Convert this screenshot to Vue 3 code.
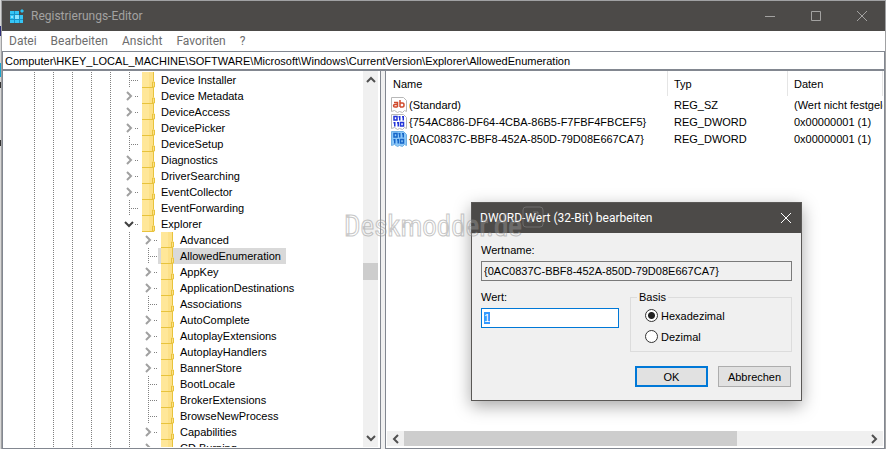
<script setup>
import { onMounted, ref } from "vue";

const menu = ["Datei", "Bearbeiten", "Ansicht", "Favoriten", "?"];
const path = ref(
  "Computer\\HKEY_LOCAL_MACHINE\\SOFTWARE\\Microsoft\\Windows\\CurrentVersion\\Explorer\\AllowedEnumeration"
);

// level 1 = below CurrentVersion, level 2 = below Explorer
const keys = [
  { name: "Device Installer", level: 1 },
  { name: "Device Metadata", level: 1, state: "closed" },
  { name: "DeviceAccess", level: 1, state: "closed" },
  { name: "DevicePicker", level: 1, state: "closed" },
  { name: "DeviceSetup", level: 1 },
  { name: "Diagnostics", level: 1, state: "closed" },
  { name: "DriverSearching", level: 1, state: "closed" },
  { name: "EventCollector", level: 1, state: "closed" },
  { name: "EventForwarding", level: 1 },
  { name: "Explorer", level: 1, state: "open" },
  { name: "Advanced", level: 2, state: "closed" },
  { name: "AllowedEnumeration", level: 2, selected: true },
  { name: "AppKey", level: 2, state: "closed" },
  { name: "ApplicationDestinations", level: 2, state: "closed" },
  { name: "Associations", level: 2 },
  { name: "AutoComplete", level: 2, state: "closed" },
  { name: "AutoplayExtensions", level: 2, state: "closed" },
  { name: "AutoplayHandlers", level: 2, state: "closed" },
  { name: "BannerStore", level: 2, state: "closed" },
  { name: "BootLocale", level: 2 },
  { name: "BrokerExtensions", level: 2 },
  { name: "BrowseNewProcess", level: 2 },
  { name: "Capabilities", level: 2, state: "closed" },
  { name: "CD Burning", level: 2, state: "closed" },
];

const values = [
  { name: "(Standard)", type: "REG_SZ", data: "(Wert nicht festgelegt)" },
  {
    name: "{754AC886-DF64-4CBA-86B5-F7FBF4FBCEF5}",
    type: "REG_DWORD",
    data: "0x00000001 (1)",
  },
  {
    name: "{0AC0837C-BBF8-452A-850D-79D08E667CA7}",
    type: "REG_DWORD",
    data: "0x00000001 (1)",
    selected: true,
  },
];

const valueName = ref("{0AC0837C-BBF8-452A-850D-79D08E667CA7}");
const value = ref("1");
const base = ref("hex");
const valueInput = ref(null);

onMounted(() => {
  valueInput.value.focus();
  valueInput.value.select();
});
</script>

<template>
  <main class="desktop">
    <section class="window">
      <header class="titlebar">
        <svg class="app-icon" width="15" height="15" viewBox="0 0 15 15">
          <path fill="#1793c8" d="M0 2h9v4h4v8H0z" />
          <path fill="#35c5f5" d="M0 2h4v3H0zM5 2h4v3H5zM0 6h4v4H0zM5 6h4v4H5zM10 6h3v4h-3zM0 11h4v3H0zM5 11h4v3H5zM10 11h3v3h-3z" />
          <path fill="#8fe4ff" d="M5 6h4v4H5zM1 7h2v2H1z" />
          <path fill="#2bc4f8" d="M12 0l2 2-2 2-2-2z" />
        </svg>
        <h1>Registrierungs-Editor</h1>
        <div class="window-buttons">
          <button aria-label="Minimieren">
            <svg width="12" height="12"><path d="M1 6.500h10" /></svg>
          </button>
          <button aria-label="Maximieren">
            <svg width="12" height="12"><path d="M1.500 1.500h9v9h-9z" /></svg>
          </button>
          <button aria-label="Schließen">
            <svg width="12" height="12"><path d="M1 1l10 10M11 1L1 11" /></svg>
          </button>
        </div>
      </header>

      <nav class="menu">
        <button v-for="item in menu" :key="item">{{ item }}</button>
      </nav>

      <input v-model="path" class="address" aria-label="Adresse" />

      <div class="panes">
        <div class="pane tree-pane">
          <ul class="tree">
            <li v-for="key in keys" :key="key.name" :class="{ selected: key.selected }">
              <span v-for="n in key.level + 4" :key="n" class="guide"></span>
              <span class="branch" :class="key.state || 'leaf'">
                <svg v-if="key.state === 'closed'" width="8" height="10">
                  <path d="M2 1l4 4-4 4" stroke="#a0a0a0" />
                </svg>
                <svg v-if="key.state === 'open'" width="10" height="8">
                  <path d="M1 2l4 4 4-4" stroke="#404040" />
                </svg>
              </span>
              <span class="entry">
                <svg class="folder" width="14" height="16">
                  <path fill="#ffe799" d="M0 0h12v15H0z" />
                  <path fill="#fbdc7a" d="M7 0h5v15H7z" opacity="0.5" />
                  <path fill="none" stroke="#e8c33c" d="M0 15.500h12M11.500 0v9M10.500 15v-5h2v5z" />
                </svg>
                <span class="key-name">{{ key.name }}</span>
              </span>
            </li>
          </ul>
          <div class="scrollbar vertical">
            <svg width="10" height="8"><path d="M1 6l4-4 4 4" /></svg>
            <div class="track"><div class="thumb"></div></div>
            <svg width="10" height="8"><path d="M1 2l4 4 4-4" /></svg>
          </div>
        </div>

        <div class="pane list-pane">
          <div class="list">
            <table>
              <colgroup>
                <col class="col-name" />
                <col class="col-type" />
                <col />
              </colgroup>
              <thead>
                <tr>
                  <th>Name</th>
                  <th>Typ</th>
                  <th>Daten</th>
                </tr>
              </thead>
              <tbody>
                <tr v-for="row in values" :key="row.name">
                  <td>
                    <span class="value-name">
                      <svg width="16" height="16" viewBox="0 0 16 16">
                        <path
                          :fill="row.selected ? '#8cc8f8' : '#fff'"
                          :stroke="row.selected ? '#6caee4' : '#b8b8b8'"
                          d="M.5.500h12l3 3v11l-2-1-2 2-3-1-2 1-3-2-3 1z"
                        />
                        <g v-if="row.type === 'REG_SZ'" fill="none" stroke="#d04a2c" stroke-width="1.500">
                          <path d="M3 5.500h3.500V10M6.500 7.500H4q-1.500 0-1.500 1.200T4 10h2.500M9 3v7M9 6h2.500q1.500 0 1.500 2t-1.500 2H9" />
                        </g>
                        <g v-else fill="none" :stroke="row.selected ? '#1565c8' : '#2234d8'" stroke-width="1.500">
                          <path d="M3 2.500h3v3.500H3zM8.750 2v4.500M12.250 2v4.500M7.500 2.750h1M11 2.750h1M3.750 8v4.500M7.250 8v4.500M2.500 8.750h1M6 8.750h1M9.500 8.500h3V12h-3z" />
                        </g>
                      </svg>
                      {{ row.name }}
                    </span>
                  </td>
                  <td>{{ row.type }}</td>
                  <td>{{ row.data }}</td>
                </tr>
              </tbody>
            </table>
          </div>
          <div class="scrollbar horizontal">
            <svg width="8" height="10"><path d="M6 1L2 5l4 4" /></svg>
            <div class="track"><div class="thumb"></div></div>
            <svg width="8" height="10"><path d="M2 1l4 4-4 4" /></svg>
          </div>
        </div>
      </div>
    </section>

    <form class="dialog" @submit.prevent>
      <header class="dialog-title">
        <h2>DWORD-Wert (32-Bit) bearbeiten</h2>
        <button type="button" aria-label="Schließen">
          <svg width="12" height="12"><path d="M1 1l10 10M11 1L1 11" /></svg>
        </button>
      </header>
      <div class="dialog-body">
        <label for="value-name">Wertname:</label>
        <input id="value-name" v-model="valueName" readonly />
        <div class="fields">
          <div class="value-field">
            <label for="value">Wert:</label>
            <input id="value" ref="valueInput" v-model="value" />
          </div>
          <fieldset>
            <legend>Basis</legend>
            <label><input v-model="base" type="radio" name="base" value="hex" />Hexadezimal</label>
            <label><input v-model="base" type="radio" name="base" value="dec" />Dezimal</label>
          </fieldset>
        </div>
        <div class="actions">
          <button class="default">OK</button>
          <button type="button">Abbrechen</button>
        </div>
      </div>
    </form>

    <div class="watermark">
      <span>Deskmodder.de</span>
      <svg width="22" height="22" viewBox="0 0 22 22">
        <rect x="1" y="1" width="20" height="20" rx="3" />
        <path d="M6 16L16 6M11 6h5v5M6 12v4h4" />
      </svg>
    </div>
  </main>
</template>

<style>
body {
  margin: 0;
  overflow: hidden;
}
</style>

<style scoped>
.desktop {
  position: relative;
  box-sizing: border-box;
  height: 100vh;
  padding: 1px 1px 0 2px;
  background:
    linear-gradient(
      #d8d8d8 26px, #2e2e78 26px 36px, #d8d8d8 36px 63px, #18a4cc 63px 77px,
      #d8d8d8 77px 82px, #333 82px 88px, #d8d8d8 88px 140px, #333 140px 146px, #d8d8d8 146px
    ) 0 0 / 1px 100% no-repeat,
    #a0a1a3;
  font-family: "Liberation Sans", Arial, sans-serif;
  font-size: 11px;
  color: #000;
}

button,
input {
  box-sizing: border-box;
  margin: 0;
  padding: 0;
  border: 0;
  border-radius: 0;
  outline: 0;
  background: none;
  font: inherit;
  color: inherit;
}

svg {
  display: block;
  flex: none;
}

.window {
  display: flex;
  flex-direction: column;
  height: 100%;
  background: #fff;
}

.titlebar {
  display: flex;
  align-items: center;
  flex: none;
  height: 30px;
  padding-left: 8px;
  background: #4c4a48;
}

.titlebar h1 {
  flex: 1;
  margin: 0 0 0 6px;
  font: 12px Roboto, sans-serif;
  color: #a3a2a1;
}

.window-buttons {
  display: flex;
}

.window-buttons button {
  display: flex;
  align-items: center;
  justify-content: center;
  width: 46px;
  height: 30px;
}

.window-buttons path {
  fill: none;
  stroke: #a3a2a1;
}

.menu {
  display: flex;
  flex: none;
  gap: 14px;
  height: 20px;
  padding-left: 7px;
}

.menu button {
  font: 12px Roboto, sans-serif;
  color: #6d6d6d;
}

.address {
  flex: none;
  width: 100%;
  height: 20px;
  padding: 0 2px;
  border: 1px solid #828790;
  border-bottom-width: 2px;
}

.panes {
  display: flex;
  flex: 1;
  min-height: 0;
  gap: 4px;
  background: #f0f0f0;
}

.pane {
  display: flex;
  box-sizing: border-box;
  border: 1px solid #828790;
  border-top: 0;
  background: #fff;
}

.tree-pane {
  flex: none;
  width: 379px;
  padding: 0 2px 1px 0;
}

.tree {
  flex: 1;
  margin: 0;
  padding: 1px 0 0 22px;
  overflow: hidden;
  list-style: none;
}

.tree li {
  display: flex;
  height: 16px;
}

.guide,
.branch {
  flex: none;
  width: 19px;
}

.guide,
.leaf {
  background: repeating-linear-gradient(#808080 0 1px, transparent 1px 2px) 9px 0 / 1px 100% no-repeat;
}

.branch {
  position: relative;
}

.branch::after {
  position: absolute;
  top: 8px;
  right: 0;
  width: 4px;
  height: 1px;
  background: repeating-linear-gradient(90deg, #808080 0 1px, transparent 1px 2px);
  content: "";
}

.branch.leaf::after {
  width: 10px;
}

.branch svg {
  margin: 3px 0 0 5px;
}

.branch.open svg {
  margin: 4px 0 0 4px;
}

.branch path {
  fill: none;
  stroke-width: 2;
}

.entry {
  display: flex;
  padding-left: 3px;
}

.selected .entry {
  background: #d9d9d9;
}

.key-name {
  padding: 0 5px;
  line-height: 16px;
  white-space: nowrap;
}

.scrollbar {
  display: flex;
  align-items: center;
  flex: none;
  background: #f0f0f0;
}

.scrollbar path {
  fill: none;
  stroke: #505050;
  stroke-width: 2;
}

.track {
  display: flex;
  flex: 1;
}

.thumb {
  background: #cdcdcd;
}

.vertical {
  flex-direction: column;
  width: 15px;
  padding: 5px 0;
}

.vertical .track {
  flex-direction: column;
  width: 100%;
}

.vertical .track::before {
  flex: 0 0 51%;
  content: "";
}

.vertical .thumb {
  height: 17px;
}

.list-pane {
  flex: 1;
  flex-direction: column;
  min-width: 0;
  padding: 0 1px 2px;
}

.list {
  flex: 1;
  min-height: 0;
  overflow: hidden;
}

table {
  width: 100%;
  table-layout: fixed;
  border-collapse: collapse;
}

.col-name {
  width: 281px;
}

.col-type {
  width: 120px;
}

th,
td {
  overflow: hidden;
  padding: 0 0 0 6px;
  font-weight: 400;
  text-align: left;
  white-space: nowrap;
}

th {
  height: 25px;
  box-shadow: inset -1px 0 #e5e5e5;
}

td {
  height: 17px;
}

td:first-child {
  padding-left: 4px;
}

.value-name {
  display: flex;
  align-items: center;
  gap: 2px;
}

.horizontal {
  height: 15px;
  padding: 0 5px;
}

.horizontal .track {
  height: 100%;
  margin: 0 4px;
}

.horizontal .thumb {
  width: 72%;
}

.dialog {
  position: absolute;
  top: 202px;
  right: 84px;
  box-sizing: border-box;
  width: 331px;
  border: 1px solid #5a5856;
  background: #f0f0f0;
  box-shadow: 0 5px 16px rgba(0, 0, 0, 0.35);
}

.dialog-title {
  display: flex;
  align-items: center;
  justify-content: space-between;
  height: 30px;
  padding: 0 9px 0 8px;
  background: #4c4a48;
  color: #fff;
}

.dialog-title h2 {
  margin: 0;
  font: 12px Roboto, sans-serif;
}

.dialog-title path {
  fill: none;
  stroke: #fff;
}

.dialog-body {
  padding: 10px 9px 13px;
}

.dialog-body label {
  display: block;
  line-height: 14px;
}

.dialog-body input:not([type="radio"]) {
  display: block;
  width: 100%;
  height: 20px;
  margin-top: 4px;
  padding: 0 2px;
  border: 1px solid #7a7a7a;
}

.dialog-body .value-field input {
  border-color: #0078d7;
  background: #fff;
}

.value-field input::selection {
  background: rgba(51, 153, 255, 0.99);
  color: #fff;
}

.fields {
  display: flex;
  gap: 11px;
  margin-top: 9px;
}

.value-field {
  flex: 1;
}

fieldset {
  box-sizing: border-box;
  width: 162px;
  height: 62px;
  margin: 0;
  padding: 1px 14px;
  border: 1px solid #dcdcdc;
}

legend {
  margin-left: -8px;
  padding: 0 2px;
  line-height: 14px;
}

.dialog-body fieldset label {
  display: flex;
  align-items: center;
  gap: 3px;
  height: 21px;
}

input[type="radio"] {
  width: 13px;
  height: 13px;
  border: 1px solid #333;
  border-radius: 50%;
  appearance: none;
  background: #fff;
}

input[type="radio"]:checked {
  background: radial-gradient(circle, #222 3px, #fff 4px);
}

.actions {
  display: flex;
  justify-content: flex-end;
  gap: 10px;
  margin-top: 14px;
  padding-right: 1px;
}

.actions button {
  width: 73px;
  height: 21px;
  border: 1px solid #adadad;
  background: #e1e1e1;
}

.actions .default {
  border: 2px solid #0078d7;
}

.watermark {
  position: absolute;
  top: 206px;
  left: 344px;
  display: flex;
  pointer-events: none;
  opacity: 0.5;
}

.watermark span {
  font: 29px/40px "Liberation Sans Narrow", "Roboto Condensed", "Open Sans Condensed", "Liberation Sans", sans-serif;
  color: rgba(255, 255, 255, 0.4);
  -webkit-text-stroke: 1px #909090;
}

.watermark svg {
  fill: none;
  stroke: #909090;
}
</style>
